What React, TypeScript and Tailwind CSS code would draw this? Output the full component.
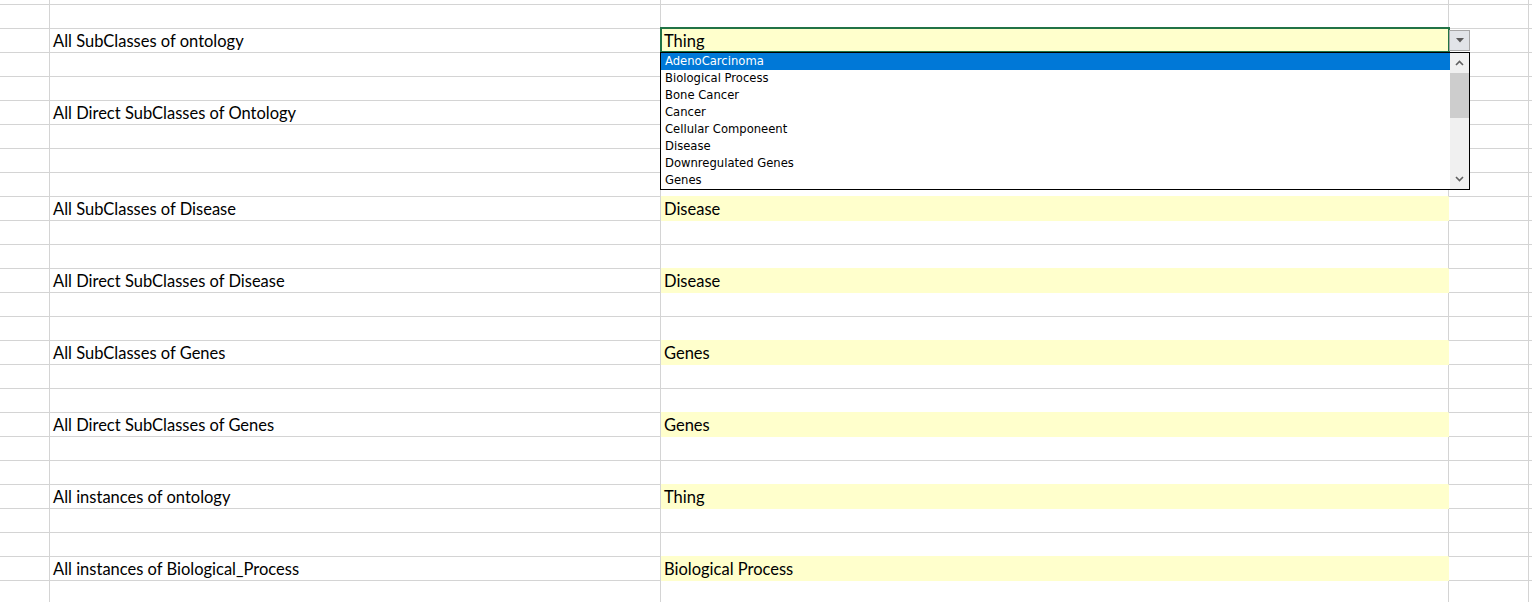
import React from 'react';

type Row = { label?: string; value?: string };

const entries: Record<number, Row> = {
	1: { label: 'All SubClasses of ontology', value: 'Thing' },
	4: { label: 'All Direct SubClasses of Ontology', value: '' },
	8: { label: 'All SubClasses of Disease', value: 'Disease' },
	11: { label: 'All Direct SubClasses of Disease', value: 'Disease' },
	14: { label: 'All SubClasses of Genes', value: 'Genes' },
	17: { label: 'All Direct SubClasses of Genes', value: 'Genes' },
	20: { label: 'All instances of ontology', value: 'Thing' },
	23: { label: 'All instances of Biological_Process', value: 'Biological Process' },
};

const options = [
	'AdenoCarcinoma',
	'Biological Process',
	'Bone Cancer',
	'Cancer',
	'Cellular Componeent',
	'Disease',
	'Downregulated Genes',
	'Genes',
];

const ROW_COUNT = 25;

function SheetRow({ index }: { index: number }) {
	const row = entries[index];
	const filled = row?.value !== undefined;
	const nextFilled = entries[index + 1]?.value !== undefined;

	return (
		<div className="flex h-[24px]">
			<div className="w-[50px] shrink-0 border-r border-b border-[#d4d4d4]" />
			<div className="flex w-[611px] shrink-0 items-end border-r border-b border-[#d4d4d4] pb-[1px] pl-[3px] text-[16.5px] leading-[19px] text-black">
				{row?.label}
			</div>
			<div
				className={
					filled
						? 'flex w-[788px] shrink-0 items-end border-r border-b border-[#ffffcc] bg-[#ffffcc] pb-[1px] pl-[3px] text-[16.5px] leading-[19px] text-black'
						: nextFilled
							? 'w-[788px] shrink-0 border-r border-b border-r-[#d4d4d4] border-b-[#ffffcc]'
							: 'w-[788px] shrink-0 border-r border-b border-[#d4d4d4]'
				}
			>
				{row?.value}
			</div>
			<div className="w-[80px] shrink-0 border-r border-b border-[#d4d4d4]" />
			<div className="flex-1 border-b border-[#d4d4d4]" />
		</div>
	);
}

function DropList() {
	return (
		<div className="absolute top-[52px] left-[660px] flex h-[138px] w-[810px] border border-black bg-white font-['DejaVu_Sans',sans-serif] text-[11.6px] text-black">
			<div className="flex flex-1 flex-col">
				{options.map((o, i) => (
					<div
						key={o}
						className={
							i === 0
								? 'flex h-[17px] items-center bg-[#0078d7] pt-[1px] pl-[4px] text-white'
								: 'flex h-[17px] items-center pt-[1px] pl-[4px]'
						}
					>
						{o}
					</div>
				))}
			</div>
			<div className="flex w-[19px] flex-col bg-[#f0f0f0]">
				<div className="flex h-[20px] items-center justify-center">
					<svg width="9" height="6" viewBox="0 0 9 6">
						<path d="M1 5 L4.5 1.5 L8 5" fill="none" stroke="#606060" strokeWidth="1.6" />
					</svg>
				</div>
				<div className="h-[45px] bg-[#cdcdcd]" />
				<div className="flex-1" />
				<div className="flex h-[20px] items-center justify-center">
					<svg width="9" height="6" viewBox="0 0 9 6">
						<path d="M1 1 L4.5 4.5 L8 1" fill="none" stroke="#606060" strokeWidth="1.6" />
					</svg>
				</div>
			</div>
		</div>
	);
}

export default function App() {
	return (
		<div className="relative h-[602px] w-[1532px] overflow-hidden bg-white font-['Lato',sans-serif]">
			<div className="flex h-[5px]">
				<div className="w-[50px] shrink-0 border-r border-b border-[#d4d4d4]" />
				<div className="w-[611px] shrink-0 border-r border-b border-[#d4d4d4]" />
				<div className="w-[788px] shrink-0 border-r border-b border-[#d4d4d4]" />
				<div className="w-[80px] shrink-0 border-r border-b border-[#d4d4d4]" />
				<div className="flex-1 border-b border-[#d4d4d4]" />
			</div>
			{Array.from({ length: ROW_COUNT }, (_, i) => (
				<SheetRow key={i} index={i} />
			))}

			{/* active cell outline */}
			<div className="pointer-events-none absolute top-[27px] left-[660px] h-[26px] w-[790px] border-2 border-[#217346]" />

			{/* in-cell dropdown button */}
			<div className="absolute top-[30px] left-[1449px] flex h-[21px] w-[21px] items-center justify-center border border-[#a6a6a6] bg-[#e1e4e8]">
				<svg width="8" height="5" viewBox="0 0 8 5">
					<path d="M0 0 H8 L4 4.5 Z" fill="#5a5a5a" />
				</svg>
			</div>

			<DropList />
		</div>
	);
}
